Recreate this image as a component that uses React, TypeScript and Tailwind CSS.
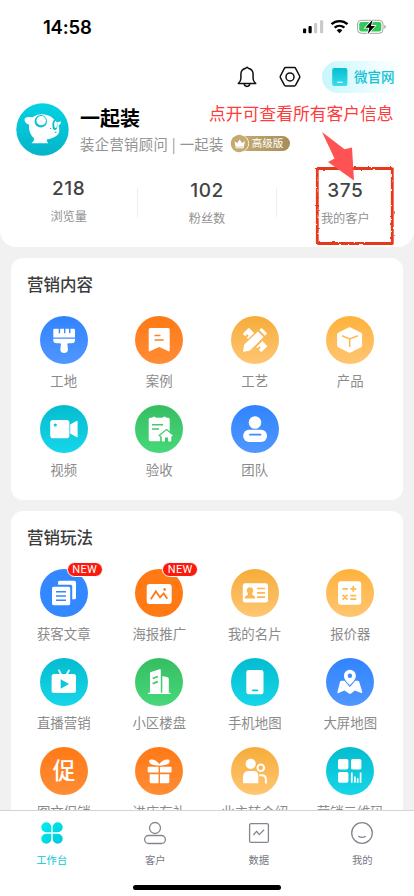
import type { ReactNode } from 'react';

type Tone = 'blue' | 'orange' | 'amber' | 'yellow' | 'cyan' | 'green' | 'flatBlue' | 'flatOrange';

interface Entry {
  label: string;
  tone: Tone;
  icon: ReactNode;
  isNew?: boolean;
}

const tones: Record<Tone, string> = {
  blue: 'bg-linear-to-b from-[#3083ff] to-[#5097ff] text-[#3f8cff]',
  orange: 'bg-linear-to-b from-[#ff7913] to-[#ff8c34] text-[#ff8122]',
  amber: 'bg-linear-to-b from-[#f6ac38] to-[#ffc671] text-[#fbb850]',
  yellow: 'bg-linear-to-b from-[#ffb239] to-[#ffc570] text-[#ffba50]',
  cyan: 'bg-linear-to-b from-[#04bccf] to-[#16d6e9] text-[#0cc8db]',
  green: 'bg-linear-to-b from-[#37bd62] to-[#46d87a] text-[#3fcb6e]',
  flatBlue: 'bg-[#3388ff] text-[#3388ff]',
  flatOrange: 'bg-[#ff7a14] text-[#ff7a14]',
};

const contentEntries: Entry[] = [
  {
    label: '工地',
    tone: 'blue',
    icon: (
      <>
        <path d="M14.3 12.8h4.4v4.4h1.400v-4.400h3.900v4.400h1.400v-4.400h3.600v4.400h1.400v-4.400h3.300q1.300 0 1.300 1.300v7.300H13.300v-7.600q0-1 1-1z" />
        <path d="M13.3 22.7H35v1.3q0 3.2-3.3 3.2h-3.2q-1.3 0-1.1 1.4l.6 5.2a3.9 3.9 0 0 1-7.7 0l.6-5.2q.2-1.4-1.1-1.4h-3.2q-3.3 0-3.3-3.2z" />
      </>
    ),
  },
  {
    label: '案例',
    tone: 'orange',
    icon: (
      <>
        <path d="M15.2 12h18q1.5 0 1.5 1.5v21.2q0 1.2-1.1.6l-9.4-4.4-9.4 4.4q-1.1.6-1.1-.6V13.5q0-1.5 1.5-1.5z" />
        <path d="M19.5 19.5h6M19.5 24h9.2" stroke="currentColor" strokeWidth="1.7" />
      </>
    ),
  },
  {
    label: '工艺',
    tone: 'amber',
    icon: (
      <>
        <path d="M17.3 12.2 12.2 17.3q-.5.5 0 1l2 2 2-2 1.5 1.5-2 2 1.3 1.3 6.2-6.2-4.9-4.7q-.5-.5-1 0zM31.4 25l-6.2 6.2 1.1 1.1 2-2 1.5 1.5-2 2 2 2q.5.5 1 0l5.1-5.1q.5-.5 0-1z" />
        <path d="m26.9 15.5 5.6 5.6-13 13q-.5.6-1.3.7l-5.2.9q-1 .1-.9-.9l.9-5.3q.1-.7.6-1.2zM28.3 14.1l1.7-1.7q.6-.6 1.2 0l4.4 4.4q.6.6 0 1.2l-1.7 1.7z" />
      </>
    ),
  },
  {
    label: '产品',
    tone: 'yellow',
    icon: (
      <>
        <path d="M22.6 11.4q1-.5 2 0l10.5 5.3q1 .5 1 1.6v11.3q0 1.1-1 1.6l-10.5 5.3q-1 .5-2 0l-10.5-5.3q-1-.5-1-1.6V18.3q0-1.1 1-1.6z" />
        <path d="m16 19.8 7.7 3.2 8.2-3.2M23.7 23v8" fill="none" stroke="currentColor" strokeWidth="1.6" />
      </>
    ),
  },
  {
    label: '视频',
    tone: 'cyan',
    icon: (
      <>
        <rect x="10.2" y="15" width="19.2" height="18.2" rx="2.8" />
        <path d="m30.2 19.6 6.2-3.6q1.2-.6 1.2.7v14.8q0 1.3-1.2.6l-6.2-3.6z" />
        <circle cx="15.3" cy="20" r="1.6" fill="currentColor" />
      </>
    ),
  },
  {
    label: '验收',
    tone: 'green',
    icon: (
      <>
        <path d="M15.2 12.8h2l.8-1h2l.8 1h6.8l.8-1h2l.8 1h2q1.5 0 1.5 1.5v20.2q0 1.7-1.5 1.7h-18q-1.5 0-1.5-1.7V14.3q0-1.5 1.5-1.5z" />
        <path d="M17 19.7h11M17 24h7" stroke="currentColor" strokeWidth="1.6" />
        <path d="m31.5 25.200 6.400 5.200-1.200 1v5H26.400v-5l-1.300-1z" fill="currentColor" stroke="currentColor" strokeWidth="2.400" />
        <path d="m31.500 25.300 6.300 5.200-.7.900h-.8v5h-3.200v-3.800h-3.100v3.800h-3.200v-5H26l-.8-.9z" />
      </>
    ),
  },
  {
    label: '团队',
    tone: 'blue',
    icon: (
      <>
        <circle cx="24" cy="17.5" r="6.3" />
        <rect x="12.2" y="24.8" width="23.8" height="12.2" rx="5.8" />
        <path d="M19 29.7h10.5" stroke="currentColor" strokeWidth="1.7" strokeLinecap="round" />
      </>
    ),
  },
];

const playEntries: Entry[] = [
  {
    label: '获客文章',
    tone: 'flatBlue',
    isNew: true,
    icon: (
      <>
        <rect x="18" y="11.8" width="18" height="18.500" rx="1.600" />
        <path d="M16 15.700h14.600q1.600 0 1.600 1.600V34H16z" fill="currentColor" />
        <rect x="12" y="17.8" width="18.2" height="18.4" rx="1.6" />
        <path d="M16 22.7h10M16 27h10M16 31.3h10" stroke="currentColor" strokeWidth="1.6" />
      </>
    ),
  },
  {
    label: '海报推广',
    tone: 'flatOrange',
    isNew: true,
    icon: (
      <>
        <rect x="11.7" y="15" width="25" height="20" rx="3" />
        <path d="m15.8 30.2 5-7.8 4.3 6 3.6-4 3.6 5.3" fill="none" stroke="currentColor" strokeWidth="1.8" />
        <circle cx="29.6" cy="20.4" r="1.3" fill="currentColor" />
      </>
    ),
  },
  {
    label: '我的名片',
    tone: 'amber',
    icon: (
      <>
        <rect x="11.8" y="14.3" width="25.2" height="19.3" rx="2.4" />
        <path d="M19 18.2c3.4 0 3.7 3.4 2.6 5.4-.7 1.3-1 2.3.4 2.7 1.4.5 2.2 1.4 2.2 3.3H13.8c0-1.9.8-2.8 2.2-3.3 1.4-.4 1.1-1.4.4-2.7-1.1-2-.8-5.4 2.6-5.4z" fill="currentColor" />
        <path d="M26 19.5h8M26 23.8h8M26 28.2h8" stroke="currentColor" strokeWidth="1.7" />
      </>
    ),
  },
  {
    label: '报价器',
    tone: 'yellow',
    icon: (
      <>
        <rect x="12" y="12.2" width="23.2" height="23.6" rx="3" />
        <path d="M16.3 19.8h5.8M24.3 19.8h6M27.3 16.8v6M16.6 25.9l4.8 4.8M21.4 25.9l-4.8 4.8M24.3 26.7h6M24.3 30.1h6" stroke="currentColor" strokeWidth="1.8" />
      </>
    ),
  },
  {
    label: '直播营销',
    tone: 'cyan',
    icon: (
      <>
        <rect x="11.6" y="16" width="24.4" height="19" rx="2.5" />
        <path d="m19 12.3 2 4M29 12.5l-2.3 4" stroke="#fff" strokeWidth="1.7" strokeLinecap="round" />
        <path d="m20.7 21.3 8.3 4.7-8.3 4.7z" fill="currentColor" />
      </>
    ),
  },
  {
    label: '小区楼盘',
    tone: 'green',
    icon: (
      <>
        <path d="M15 15.2q0-1 1-1.3l8.6-2.7q1.2-.3 1.2.8v22.8H35q.6 0 .6.6t-.6.6H13.5q-.6 0-.6-.6t.6-.6H15z" />
        <path d="m27.3 18 5.3 1.3q1.2.3 1.2 1.4V35h-6.5z" />
        <path d="m17.7 20.5 5.2-2M17.7 25.7l5.2-2" stroke="currentColor" strokeWidth="1.8" />
      </>
    ),
  },
  {
    label: '手机地图',
    tone: 'cyan',
    icon: (
      <>
        <rect x="15.3" y="12" width="17.2" height="24.2" rx="2.3" />
        <path d="M21.8 32.3h4.6" stroke="currentColor" strokeWidth="1.7" strokeLinecap="round" />
      </>
    ),
  },
  {
    label: '大屏地图',
    tone: 'blue',
    icon: (
      <>
        <path d="M15.5 22.7h3.2l5.2 6.2 5.2-6.2h2.4q1.4 0 1.8 1.2l2.9 9.8q.4 1.6-1.1 1.2L29 32.6l-4 3q-1 .8-2 0l-4.6-3-5.8 2.5q-1.6.4-1.1-1.3l2.5-9.900q.3-1.200 1.500-1.200z" />
        <path d="M23.9 11.7a6 6 0 0 1 6 6c0 4-3.6 7-6 9.6-2.4-2.6-6-5.6-6-9.6a6 6 0 0 1 6-6z" stroke="currentColor" strokeWidth="1.600" paintOrder="stroke" />
        <circle cx="23.9" cy="17.8" r="2.2" fill="currentColor" />
      </>
    ),
  },
  {
    label: '图文促销',
    tone: 'orange',
    icon: (
      <text x="24" y="32.2" textAnchor="middle" fontSize="22.5" fontWeight="500">
        促
      </text>
    ),
  },
  {
    label: '进店有礼',
    tone: 'orange',
    icon: (
      <>
        <path d="M13.7 19.8h9.9v5.8h-9.9q-1 0-1-1v-3.8q0-1 1-1zM25 19.8h10.6q1 0 1 1v3.8q0 1-1 1H25zM14.7 27.2h8.9v9.1h-7.4q-1.5 0-1.5-1.5zM25 27.2h9.3v7.6q0 1.5-1.5 1.5H25z" />
        <path d="M24.3 18.5c-3.7.3-9.6-.7-10.1-3.9-.2-1.2.8-2 2.3-2 3 0 6.3 2 7.8 4.6 1.5-2.6 5.1-4.6 8.1-4.6 1.5 0 2.5.8 2.3 2-.5 3.2-6.7 4.2-10.4 3.9z" />
      </>
    ),
  },
  {
    label: '业主转介绍',
    tone: 'amber',
    icon: (
      <>
        <circle cx="19.7" cy="16.8" r="5.1" />
        <path d="M12 30q0-6 5.5-6h5q4 0 4.8 4v8.2H13q-1 0-1-1z" />
        <circle cx="29.8" cy="20.8" r="3.3" fill="none" stroke="#fff" strokeWidth="2" />
        <path d="M28.2 28.2h2.5q4.2 0 4.2 4.2v4" fill="none" stroke="#fff" strokeWidth="2" />
      </>
    ),
  },
  {
    label: '营销二维码',
    tone: 'cyan',
    icon: (
      <>
        <rect x="12" y="12" width="10.4" height="10.6" rx="1.8" />
        <rect x="25" y="12" width="10.4" height="10.6" rx="1.8" />
        <rect x="12" y="25" width="10.4" height="10.8" rx="1.8" />
        <path d="M25.800 25.500v10.300M28.900 29.500v6.300M31.700 31.200v4.600M34.600 25.500v10.300" stroke="#fff" strokeWidth="1.700" />
      </>
    ),
  },
];

const StatusBar = () => (
  <div className="flex h-[54px] items-center justify-between pl-[43px] pr-[28px]">
    <span className="font-[Inter,sans-serif] text-[18.5px] font-semibold leading-none tracking-[-0.2px] text-black">14:58</span>
    <svg width="84" height="16" viewBox="0 0 84 16">
      <rect x="1" y="9.5" width="3.2" height="4.7" rx="1" />
      <rect x="6.500" y="7" width="3.2" height="7.2" rx="1" />
      <rect x="12" y="4" width="3.2" height="10.2" rx="1" fill="#cacaca" />
      <rect x="18" y="1.2" width="3.2" height="13" rx="1" fill="#cacaca" />
      <path d="M29.5 5.2a12 12 0 0 1 16 0M32.6 8.7a7.5 7.5 0 0 1 9.8 0" fill="none" stroke="#000" strokeWidth="2.4" />
      <path d="M34.7 11.2a4.3 4.3 0 0 1 5.6 0l-2.8 3z" />
      <rect x="55.500" y="1.3" width="25.5" height="13" rx="3.8" fill="none" stroke="#a3a3a3" />
      <rect x="57.200" y="3" width="22.1" height="9.6" rx="2.3" fill="#34c759" />
      <path d="M82.300 5.7q1.5.6 1.5 2.1t-1.5 2.1z" fill="#a3a3a3" />
      <path d="m70.600.8-7.2 7.9h4l-1.7 6.4 7.3-8.2h-4z" stroke="#fff" strokeWidth="1.6" paintOrder="stroke" />
    </svg>
  </div>
);

const TopActions = () => (
  <div className="mt-[7px] flex h-8 items-center justify-end">
    <svg className="mr-[22px]" width="20" height="22" viewBox="0 0 20 22" fill="none" stroke="#111" strokeWidth="1.5" strokeLinejoin="round">
      <path d="M10 1.2q.9 0 1.1 1c3.2.6 5 3 5 6v4.2c0 1.9.7 3.3 2.6 5.1H1.3c1.9-1.8 2.6-3.2 2.6-5.1V8.2c0-3 1.8-5.4 5-6q.2-1 1.1-1z" />
      <path d="M7.2 17.6c.1 3.7 5.5 3.7 5.6 0" />
    </svg>
    <svg className="mr-[21px]" width="22" height="22" viewBox="0 0 22 22" fill="none" stroke="#111" strokeWidth="1.5" strokeLinejoin="round">
      <path d="M6.6 1.6h8.8q.8 0 1.2.7l4 7.7q.4.8 0 1.6l-4 7.6q-.4.7-1.2.7H6.6q-.8 0-1.2-.7l-4-7.6q-.4-.8 0-1.6l4-7.700q.4-.7 1.200-.7z" />
      <circle cx="11" cy="10.9" r="4" />
    </svg>
    <div className="flex h-8 w-[92px] items-center gap-[6px] rounded-l-full bg-linear-to-r from-[#c6f7fd] to-white to-85% pl-[10px]">
      <svg width="16" height="18" viewBox="0 0 16 18">
        <defs>
          <linearGradient id="site" x2="0" y2="1">
            <stop stopColor="#05bfd1" />
            <stop offset="1" stopColor="#3adcec" />
          </linearGradient>
        </defs>
        <rect x=".2" width="15.2" height="18" rx="2" fill="url(#site)" />
        <path d="M5.3 14.3h5.2" stroke="#fff" strokeWidth="1.2" />
      </svg>
      <span className="-mt-px whitespace-nowrap text-[13.5px] font-medium leading-none text-[#0fc3d4]">微官网</span>
    </div>
  </div>
);

const Avatar = () => (
  <svg className="shrink-0" width="53" height="53" viewBox="0 0 53 53">
    <defs>
      <linearGradient id="avatar" x2="0" y2="1">
        <stop stopColor="#05d2e3" />
        <stop offset="1" stopColor="#05b4c8" />
      </linearGradient>
    </defs>
    <circle cx="26.5" cy="26.5" r="26.2" fill="url(#avatar)" />
    <path
      d="M8.7 15.5C10.5 13.8 14 13.7 16.8 14.2 21 10.500 31 10 36.500 15Q38.800 17 40.500 19.300L45.300 18.500Q44.800 21.500 42.500 22.700C43.500 26 43.700 29 42.300 31C40 33.800 35.500 36 30.800 36.600Q30.600 38.500 32.200 40.300H15.400Q18.400 38.200 18.200 35.500C14.500 32 12.500 27 13 21.700C10.500 21 8 18.800 8.700 15.500Z"
      fill="#fff"
    />
    <circle cx="24.8" cy="18.3" r="6.2" fill="#05c3d5" />
    <ellipse cx="25.200" cy="17.700" rx="4.800" ry="4.600" fill="#fff" />
    <ellipse cx="38.9" cy="22" rx="2.5" ry="5" fill="#05bccf" />
    <ellipse cx="39.6" cy="21.6" rx="1.4" ry="3.5" fill="#fff" />
    <path d="M34 25.2l1.2.7M38.5 29.300h2" stroke="#05bccf" strokeWidth="1" />
  </svg>
);

const LevelBadge = () => (
  <div className="flex h-[15px] w-[59px] items-center rounded-full bg-linear-to-r from-[#cbb176] to-[#a88d5a]">
    <svg className="-ml-px shrink-0" width="19" height="19" viewBox="0 0 19 19">
      <circle cx="9.5" cy="9.5" r="8.7" fill="#c5aa6f" />
      <path d="M11.5 1.1a8.5 8.5 0 0 1 0 16.8" fill="none" stroke="#f7eed8" strokeWidth="1" />
      <path d="M4.5 7.2 7.3 9l2.4-3.6L12.1 9l2.8-1.8-1 5.5H5.5z" fill="#fff" />
      <path d="M5.5 13.8h8.4" stroke="#fff" strokeWidth="1" />
    </svg>
    <span className="ml-[3px] whitespace-nowrap text-[10.5px] leading-none text-white">高级版</span>
  </div>
);

const Stat = ({ value, label }: { value: string; label: string }) => (
  <div className="flex flex-1 flex-col items-center">
    <span className="font-[Inter,sans-serif] text-[19px] font-medium leading-6 tracking-[0.6px] text-[#434343]">{value}</span>
    <span className="mt-[7px] text-[12.2px] leading-4 text-[#929292]">{label}</span>
  </div>
);

const Divider = () => <div className="mt-[9px] h-[29px] w-px bg-[#eeeeee]" />;

// Hand-drawn highlight around the customer count
const Annotation = () => (
  <div className="pointer-events-none absolute left-[209px] top-[101px]">
    <p className="whitespace-nowrap text-[16.8px] leading-6 text-[#ff3b3b]">点开可查看所有客户信息</p>
    <svg className="absolute left-0 top-0" width="200" height="150" viewBox="209 101 200 150">
      <defs>
        <filter id="rough">
          <feTurbulence type="fractalNoise" baseFrequency="0.3" numOctaves="2" seed="4" result="noise" />
          <feDisplacementMap in="SourceGraphic" in2="noise" scale="2.6" xChannelSelector="R" yChannelSelector="G" />
        </filter>
      </defs>
      <path d="M317.3 168.500h75v75h-75z" fill="none" stroke="#e8371c" strokeWidth="2.8" strokeLinejoin="round" filter="url(#rough)" />
      <path d="m322 132 22.5 17.3 7.5-1.8 2 33-26-18.5 6.5-3.5z" fill="#ff5252" />
    </svg>
  </div>
);

const EntryItem = ({ label, tone, icon, isNew }: Entry) => (
  <div className="flex h-[89px] flex-col items-center">
    <div className={`relative size-12 rounded-full ${tones[tone]}`}>
      <svg className="size-12" viewBox="0 0 48 48" fill="#fff">
        {icon}
      </svg>
      {isNew && (
        <span className="absolute -top-[7px] left-[27px] flex h-[15px] w-[36px] items-center justify-center rounded-full border border-white bg-[#fb1a0c] font-[Roboto,sans-serif] text-[11px] leading-none tracking-[0.3px] text-white">
          NEW
        </span>
      )}
    </div>
    <span className="mt-[6px] whitespace-nowrap text-[13.4px] leading-5 text-[#8b8b8b]">{label}</span>
  </div>
);

const EntryCard = ({ title, entries }: { title: string; entries: Entry[] }) => (
  <section className="mx-[11px] rounded-xl bg-white px-[5px] pb-[6px] pt-[14px]">
    <h2 className="pl-[11px] text-[16.5px] font-medium leading-6 text-[#3c3c3c]">{title}</h2>
    <div className="mt-[20px] grid grid-cols-4">
      {entries.map((entry) => (
        <EntryItem key={entry.label} {...entry} />
      ))}
    </div>
  </section>
);

const tabs = [
  {
    label: '工作台',
    icon: (
      <>
        <defs>
          <linearGradient id="clover" x2="1" y2="1">
            <stop stopColor="#00f0ee" />
            <stop offset="1" stopColor="#00c6da" />
          </linearGradient>
        </defs>
        <path
          d="M5.3.3a5 5 0 0 1 5 5v5h-5a5 5 0 0 1 0-10zM16.7.3a5 5 0 0 1 0 10h-5v-5a5 5 0 0 1 5-5zM5.3 11.700h5v5a5 5 0 1 1-5-5zM11.700 11.700h5a5 5 0 1 1-5 5z"
          fill="url(#clover)"
          stroke="none"
        />
      </>
    ),
  },
  {
    label: '客户',
    icon: (
      <>
        <circle cx="11" cy="6" r="5.5" />
        <rect x=".6" y="13.5" width="20.8" height="8" rx="4" />
      </>
    ),
  },
  {
    label: '数据',
    icon: (
      <>
        <rect x="1.6" y="1.6" width="18.8" height="18.8" rx="1.5" />
        <path d="m5.3 13 3.4-3.7 2.5 3.3 4.9-4.8" />
      </>
    ),
  },
  {
    label: '我的',
    icon: (
      <>
        <circle cx="11" cy="11" r="10.3" />
        <path d="M7.3 14.2q3.7 2.5 7.4 0" />
      </>
    ),
  },
];

const TabBar = () => (
  <nav className="flex h-[86px] shrink-0 flex-col border-t border-[#d4d4d4] bg-white pt-[11px]">
    <div className="grid grid-cols-4">
      {tabs.map((tab, index) => (
        <div key={tab.label} className="flex flex-col items-center">
          <svg width="22" height="22" viewBox="0 0 22 22" fill="none" stroke="#85868d" strokeWidth="1.3" className="overflow-visible">
            {tab.icon}
          </svg>
          <span className={`mt-[8px] text-[10.3px] leading-4 ${index === 0 ? 'text-[#08c6d6]' : 'text-[#777983]'}`}>{tab.label}</span>
        </div>
      ))}
    </div>
    <div className="mx-auto mt-[17px] h-[5px] w-[148px] rounded-full bg-black" />
  </nav>
);

export default function App() {
  return (
    <div className="relative flex h-[896px] w-[414px] flex-col overflow-hidden bg-[#f1f1f1] font-['Noto_Sans_CJK_SC',sans-serif]">
      <header className="h-[247px] shrink-0 rounded-b-2xl bg-white">
        <StatusBar />
        <TopActions />

        {/* Profile */}
        <div className="mt-[10px] flex h-[53px] items-center pl-4">
          <Avatar />
          <div className="ml-[11px]">
            <h1 className="text-[20px] font-bold leading-7 text-black">一起装</h1>
            <div className="flex items-center gap-[7px]">
              <p className="whitespace-nowrap text-[14.3px] leading-6 tracking-[0.4px] text-[#939393]">装企营销顾问 | 一起装</p>
              <LevelBadge />
            </div>
          </div>
        </div>

        {/* Stats */}
        <div className="mt-[23px] flex">
          <div className="-mt-[2px] flex flex-1">
            <Stat value="218" label="浏览量" />
          </div>
          <Divider />
          <Stat value="102" label="粉丝数" />
          <Divider />
          <Stat value="375" label="我的客户" />
        </div>
      </header>

      <main className="flex min-h-0 flex-1 flex-col gap-[11px] overflow-hidden pt-[11px]">
        <EntryCard title="营销内容" entries={contentEntries} />
        <EntryCard title="营销玩法" entries={playEntries} />
      </main>

      <TabBar />
      <Annotation />
    </div>
  );
}
